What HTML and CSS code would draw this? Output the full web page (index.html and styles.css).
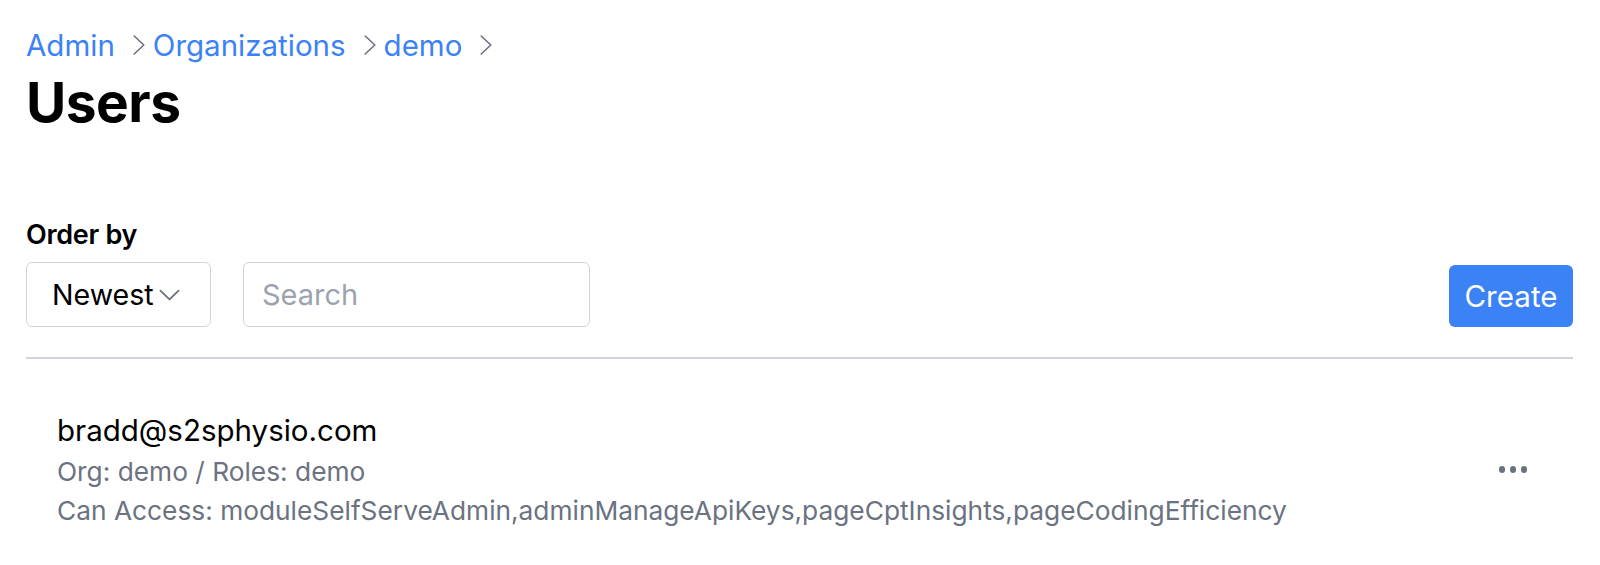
FILE: index.html
```html
<!DOCTYPE html>
<html lang="en">
<head>
<meta charset="utf-8">
<title>Users</title>
<link rel="stylesheet" href="styles.css">
</head>
<body>
<div class="page">
  <nav class="crumbs">
    <a class="crumb" href="#">Admin</a>
    <svg class="sep" viewBox="0 0 12 20" width="12" height="20"><path d="M1.2 1 L10.8 10 L1.2 19" fill="none" stroke="#6b7280" stroke-width="1.6" stroke-linecap="round" stroke-linejoin="round"/></svg>
    <a class="crumb" href="#">Organizations</a>
    <svg class="sep" viewBox="0 0 12 20" width="12" height="20"><path d="M1.2 1 L10.8 10 L1.2 19" fill="none" stroke="#6b7280" stroke-width="1.6" stroke-linecap="round" stroke-linejoin="round"/></svg>
    <a class="crumb" href="#">demo</a>
    <svg class="sep" viewBox="0 0 12 20" width="12" height="20"><path d="M1.2 1 L10.8 10 L1.2 19" fill="none" stroke="#6b7280" stroke-width="1.6" stroke-linecap="round" stroke-linejoin="round"/></svg>
  </nav>
  <h1 class="title">Users</h1>

  <div class="toolbar">
    <div class="filters">
      <label class="label">Order by</label>
      <div class="controls">
        <button class="select">Newest<svg class="caret" viewBox="0 0 22 12" width="21" height="12"><path d="M1.5 1.5 L11 10.5 L20.5 1.5" fill="none" stroke="#6b7280" stroke-width="1.9" stroke-linecap="round" stroke-linejoin="round"/></svg></button>
        <input class="search" type="text" placeholder="Search">
      </div>
    </div>
    <button class="create">Create</button>
  </div>

  <div class="divider"></div>

  <ul class="list">
    <li class="row">
      <div class="info">
        <div class="email">bradd@s2sphysio.com</div>
        <div class="meta first">Org: demo / Roles: demo</div>
        <div class="meta">Can Access: moduleSelfServeAdmin,adminManageApiKeys,pageCptInsights,pageCodingEfficiency</div>
      </div>
      <button class="more" aria-label="More"><span class="dot"></span><span class="dot"></span><span class="dot"></span></button>
    </li>
  </ul>
</div>
</body>
</html>
```

FILE: styles.css
```css
* { box-sizing: border-box; }
html, body { margin: 0; padding: 0; background: #ffffff; }
body {
  font-family: "Inter", "Liberation Sans", sans-serif;
  color: #000000;
}
.page {
  padding: 26px 27px 0 26px;
}
.crumbs {
  display: flex;
  align-items: center;
  height: 38px;
}
.crumb {
  color: #3b82f6;
  text-decoration: none;
  font-size: 29.5px;
  line-height: 38px;
}
.sep {
  margin: 0 8px 0 18px;
  display: block;
}
.title {
  margin: 6px 0 0 0;
  font-size: 55px;
  font-weight: 700;
  line-height: 64px;
  letter-spacing: -0.5px;
}
.toolbar {
  margin-top: 86px;
  display: flex;
  justify-content: space-between;
  align-items: flex-end;
}
.filters {
  display: flex;
  flex-direction: column;
}
.label {
  font-size: 27px;
  font-weight: 600;
  line-height: 30px;
  margin-bottom: 12px;
  letter-spacing: -0.3px;
}
.controls {
  display: flex;
  gap: 32px;
}
.select {
  display: flex;
  align-items: center;
  width: 185px;
  height: 65px;
  padding: 0 0 0 25px;
  border: 1.5px solid #d1d5db;
  border-radius: 6px;
  background: #ffffff;
  font-family: inherit;
  font-size: 28.6px;
  color: #000000;
}
.caret {
  margin-left: 5px;
  display: block;
}
.search {
  width: 347px;
  height: 65px;
  padding: 0 18px;
  border: 1.5px solid #d1d5db;
  border-radius: 6px;
  font-family: inherit;
  font-size: 29px;
  color: #000000;
  outline: none;
}
.search::placeholder { color: #9ca3af; }
.create {
  width: 124px;
  height: 62px;
  border: none;
  border-radius: 6px;
  background: #3b82f6;
  color: #ffffff;
  font-family: inherit;
  font-size: 29.6px;
}
.divider {
  margin-top: 30px;
  height: 1.5px;
  background: #d1d5db;
}
.list {
  list-style: none;
  margin: 0;
  padding: 0;
}
.row {
  display: flex;
  align-items: center;
  justify-content: space-between;
  padding: 50px 40px 0 31px;
}
.email {
  font-size: 29.5px;
  line-height: 42px;
}
.meta {
  font-size: 26.3px;
  line-height: 39px;
  color: #6b7280;
}
.meta.first {
  margin-top: 1.5px;
}
.more {
  display: flex;
  gap: 4.5px;
  padding: 6px;
  border: none;
  background: none;
}
.dot {
  width: 6.5px;
  height: 6.5px;
  border-radius: 50%;
  background: #6b7280;
  display: block;
}
```
